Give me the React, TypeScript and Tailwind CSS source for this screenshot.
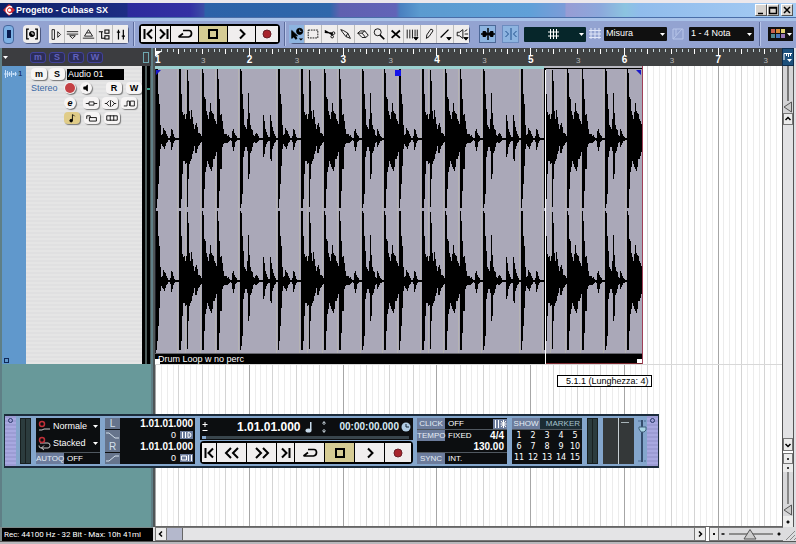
import { useState, type ReactNode } from "react";
import clsx from "clsx";

const BAR = 93.75;
const bars = [0, 1, 2, 3, 4, 5, 6];

// [up, down] peaks of the drum loop, one entry per pixel
const hit: number[][] = [
  [70, 69], [70, 60], [45, 45], [35, 27], [14, 10], [4, 5], [5, 7], [11, 8], [9, 10], [8, 7], [5, 4], [3, 3],
  [1, 1], [1, 1], [3, 3], [10, 11], [9, 8], [5, 4], [2, 2], [1, 1], [1, 1], [1, 1], [1, 1],
];
const snare: number[][] = [
  [70, 69], [70, 69], [45, 60], [27, 35], [24, 22], [25, 22], [20, 25], [25, 24],
  [69, 68], [58, 40], [28, 25], [20, 22], [29, 20], [22, 15], [15, 12], [10, 7], [14, 14], [16, 14], [12, 10],
  [6, 7], [6, 6], [5, 4], [3, 3],
];
const crash: number[][] = [
  [70, 69], [66, 69], [42, 50], [40, 33], [28, 28], [24, 22], [20, 25], [27, 28], [36, 30], [28, 32], [26, 28],
  [25, 20], [20, 20], [18, 17], [15, 13],
];
const tom: number[][] = [
  [70, 69], [60, 69], [40, 52], [24, 30], [25, 30], [18, 8], [10, 5], [5, 4], [5, 4], [5, 4], [3, 4], [4, 3],
  [2, 2], [1, 1], [1, 2], [8, 8], [10, 12], [6, 8], [4, 3], [3, 2], [1, 1], [1, 1], [1, 1],
];
const kick: number[][] = [
  [70, 69], [68, 65], [45, 55], [30, 18], [14, 12], [12, 8], [10, 8], [20, 12], [46, 40], [26, 35], [14, 14],
  [10, 12], [9, 8], [4, 4],
];
const ghosts: number[][] = [
  [3, 3], [5, 4], [6, 4], [5, 3], [3, 2], [1, 1], [1, 1], [1, 1], [1, 1], [24, 18], [18, 15], [10, 8], [7, 5],
  [4, 3], [2, 2], [2, 2], [24, 20], [18, 22], [12, 10], [8, 7], [5, 4], [3, 3], [1, 1], [1, 1],
];
const tail: number[][] = [[3, 3], [10, 8], [8, 6], [5, 4], [3, 2], [2, 2], [1, 1], [1, 1]];
const loop = [...hit, ...snare, ...crash, ...tom, ...kick, ...ghosts, ...hit, ...snare, ...crash, ...tom, ...kick, ...tail, ...crash];
const peaks = [...loop, ...loop].slice(0, 486);

function wavePath(center: number) {
  return peaks.map(([up, down], x) => `M${x} ${center - up}h1v${up + down}h-1z`).join("");
}

const slices = peaks.map(([up], x) => (up >= 69 && (x === 0 || peaks[x - 1][0] < 69) ? x : -1)).filter((x) => x > 0);

function Icon({ children, w = 16, size = 16, className }: { children: ReactNode; w?: number; size?: number; className?: string }) {
  return (
    <svg
      viewBox={`0 0 ${w} 16`}
      width={w === 16 ? size : w}
      height={size}
      fill="none"
      stroke="currentColor"
      strokeWidth={1}
      className={clsx("shrink-0", className)}
      aria-hidden="true"
    >
      {children}
    </svg>
  );
}

const glyphs = {
  start: <path d="M2.500 3v10M10 3.500 5.500 8l4.500 4.500" strokeWidth={2} />,
  end: <path d="M3 3.500 7.500 8 3 12.500M10.500 3v10" strokeWidth={2} />,
  rewind: <path d="M7 3 2 8l5 5M14 3 9 8l5 5" strokeWidth={2} />,
  forward: <path d="M2 3l5 5-5 5M9 3l5 5-5 5" strokeWidth={2} />,
  cycle: <path d="M6 4.500h6q2.500 0 2.500 3T11.500 11H1.500M6 7.500 1.500 11" strokeWidth={1.700} />,
  stop: <rect x="4" y="4" width="8" height="8" strokeWidth={2} />,
  play: <path d="m6 3.500 4.500 4.500L6 12.500" strokeWidth={2} />,
  record: <circle cx="8" cy="8" r="4" fill="#a8242c" stroke="#6a2028" strokeWidth={1} />,
};

const views: { label: string; icon: ReactNode }[] = [
  { label: "Show Inspector", icon: <path d="M2.500 2v12h3V2zM9.500 4.500v7L13 8z" /> },
  { label: "Show Infoline", icon: <path d="M1 4.500h14M1 7.500h14M4.500 9.500h7L8 13z" /> },
  { label: "Show Overview", icon: <path d="M8 2 5.500 6h5zM5.500 6 3 10h10l-2.500-4M1 12.500h14" /> },
  { label: "Open Pool", icon: <path d="M1 4.500h5M4.500 4.500v8h4M8.500 2.500h5v4h-5zM8.500 9.500h5v4h-5z" strokeWidth={1.300} /> },
  { label: "Open Mixer", icon: <path d="M5.500 2v12M11.500 2v12M3.500 5h4M9.500 10h4" strokeWidth={1.500} /> },
];

const tools: { label: string; icon: ReactNode }[] = [
  {
    label: "Object Selection",
    icon: (
      <>
        <path d="M2 4v9l2.500-2 2 3 1.500-1-2-3h2.500z" fill="currentColor" />
        <circle cx="11" cy="5" r="3.500" fill="currentColor" />
        <path d="M11 3v2h2" stroke="#8db4e0" />
        <path d="M10 13h5l-2.500 2.500z" fill="currentColor" stroke="none" />
      </>
    ),
  },
  { label: "Range Selection", icon: <path d="M2.500 3.500h11v9h-11z" strokeDasharray="2 1" /> },
  {
    label: "Split",
    icon: (
      <>
        <path d="m2 4 9 5M2 6l9 1" strokeWidth={1.500} />
        <circle cx="12" cy="7" r="1.500" />
        <circle cx="10.500" cy="11" r="1.500" />
      </>
    ),
  },
  { label: "Glue", icon: <path d="m2 3 3 1 5 3 3 6-5-2-4-5zM10 7l-2 4" /> },
  { label: "Erase", icon: <path d="m2 7 3-2.500h5l4 5-3 2.500H7zM2 7h5l4 5M7 7l3-2.500" /> },
  {
    label: "Zoom",
    icon: (
      <>
        <circle cx="6.500" cy="6" r="4" />
        <path d="m9 9 5 5" strokeWidth={2} />
      </>
    ),
  },
  { label: "Mute", icon: <path d="m3 4 9.500 8.500M12.500 4 3 12.500" strokeWidth={2} /> },
  {
    label: "Time Warp",
    icon: (
      <>
        <path d="M2.500 3v10M5.500 3v10M8.500 3v10M11.500 3v8M14 3v8" />
        <path d="M10 12h5l-2.500 3z" fill="currentColor" />
      </>
    ),
  },
  { label: "Draw", icon: <path d="M10 2.500 5.500 9 5 13l3-2 4.500-6.500q0-2-2.500-2z" /> },
  {
    label: "Line",
    icon: (
      <>
        <path d="m3 12 9-9" strokeWidth={1.500} />
        <path d="M10 12h5l-2.500 3z" fill="currentColor" />
      </>
    ),
  },
  {
    label: "Play",
    icon: (
      <>
        <path d="M2.500 6v4H5l4 3V3L5 6zM11 5l3-2M11 8h4" />
        <path d="M10 12h5l-2.500 3z" fill="currentColor" />
      </>
    ),
  },
];

function TransportKeys({ full }: { full?: boolean }) {
  const [active, setActive] = useState("Stop");
  const keys = [
    { label: "Previous Marker", icon: glyphs.start, w: 13, grow: "w-[14px]" },
    ...(full
      ? [
          { label: "Rewind", icon: glyphs.rewind, w: 16, grow: "w-[29px]" },
          { label: "Forward", icon: glyphs.forward, w: 16, grow: "w-[29px]" },
        ]
      : []),
    { label: "Next Marker", icon: glyphs.end, w: 13, grow: full ? "w-[17px]" : "w-[14px]" },
    { label: "Cycle", icon: glyphs.cycle, w: 16, grow: full ? "w-[29px]" : "w-[27px]" },
    { label: "Stop", icon: glyphs.stop, w: 16, grow: full ? "w-[29px]" : "w-[28px]" },
    { label: "Start", icon: glyphs.play, w: 16, grow: full ? "w-[29px]" : "w-[27px]" },
    { label: "Record", icon: glyphs.record, w: 16, grow: full ? "w-[26px]" : "w-[22px]" },
  ];
  return (
    <div className={clsx("flex gap-px rounded-sm bg-black p-0.5", full ? "h-[23px]" : "h-5")}>
      {keys.map((key) => (
        <button
          key={key.label}
          aria-label={key.label}
          onClick={() => setActive(key.label)}
          className={clsx(
            "flex items-center justify-center overflow-hidden text-black",
            key.grow,
            active === key.label ? "bg-[#d6cc94]" : "bg-[#f0eeee]",
          )}
        >
          <Icon w={key.w}>{key.icon}</Icon>
        </button>
      ))}
    </div>
  );
}

function Dropdown({ label, options, className }: { label: string; options: string[]; className?: string }) {
  return (
    <div className={clsx("relative flex items-center text-white", className)}>
      <select aria-label={label} className="h-full w-full appearance-none bg-transparent pl-0.5 outline-none">
        {options.map((option) => (
          <option key={option}>{option}</option>
        ))}
      </select>
      <Caret className="pointer-events-none absolute right-0.5" />
    </div>
  );
}

function Caret({ className }: { className?: string }) {
  return (
    <svg viewBox="0 0 5 3" width={5} height={3} className={className} aria-hidden="true">
      <path d="M0 0h5L2.500 3z" fill="currentColor" />
    </svg>
  );
}

function Separator() {
  return <div className="h-6 w-0.5 border-l border-[#5d6c9c] bg-[#b9c6ea]" />;
}

function TitleBar() {
  return (
    <div className="flex h-[15px] items-center border-b border-[#4a6ea8] bg-[linear-gradient(90deg,#0c2068_0px,#1d2c84_127px,#2d2a9c_128px,#3430a4_190px,#3b4ea6_204px,#2c62a8_205px,#2f67ab_330px,#6060b0_340px,#6264b8_396px,#4a80c0_400px,#5b9bd0_420px,#60a0d8_530px,#7c9cd8_565px,#989cd4_566px,#8ca8dc_600px,#8cc4e0_625px,#90bcec_640px,#a6ccf4_100%)] px-[3px]">
      <svg viewBox="0 0 12 12" width={12} height={12} aria-hidden="true">
        <path d="M6 0l6 6-6 6-6-6z" fill="#d02830" />
        <path d="M9 3.500A3.500 3.500 0 1 0 9 9" fill="none" stroke="#fff" strokeWidth={1.500} />
        <circle cx="6.500" cy="6.200" r="1.600" fill="#fff" />
      </svg>
      <h1 className="ml-px flex-1 text-[9px] leading-3 font-bold text-white">Progetto - Cubase SX</h1>
      <div className="flex">
        {[
          { label: "Minimize", d: "M2 8.500h5" },
          { label: "Maximize", d: "M1.500 2.500h7v6h-7zM1 3h8" },
          { label: "Close", d: "m2 2 6 6M8 2 2 8" },
        ].map((b) => (
          <button
            key={b.label}
            aria-label={b.label}
            className={clsx(
              "flex h-3 w-3 items-center justify-center border border-t-white border-r-[#555] border-b-[#555] border-l-white bg-[#d8d4d0]",
              b.label === "Close" && "ml-0.5",
            )}
          >
            <svg viewBox="0 0 10 10" width={10} height={10} fill="none" stroke="#000" strokeWidth={1.500} aria-hidden="true">
              <path d={b.d} />
            </svg>
          </button>
        ))}
      </div>
    </div>
  );
}

function Toolbar() {
  const [tool, setTool] = useState("Object Selection");
  return (
    <div className="flex h-[30px] items-center border-t-[3px] border-[#a9c3e9] bg-[#93a3d1] pb-px text-[9px] text-black">
      <button aria-label="Activate Project" className="ml-[3px] flex h-[19px] w-[11px] items-center justify-center rounded-sm border border-[#46679c] bg-[#7db0e4]">
        <span className="h-2 w-1 bg-[#0a1c50]" />
      </button>
      <button aria-label="Constrain Delay Compensation" className="ml-[9px] flex h-[18px] w-[17px] items-center justify-center rounded-sm bg-[#efeded] shadow-[1px_1px_0_#4c5880]">
        <Icon size={14}>
          <path d="M4.500 2.500H2v11h2.500M11.500 2.500H14v11h-2.500" strokeWidth={1.500} />
          <circle cx="8" cy="8" r="3" fill="currentColor" />
          <path d="M8 5.500V8h2.500" stroke="#fff" />
        </Icon>
      </button>
      <div className="ml-[9px] flex gap-px rounded-sm bg-[#bbb] shadow-[1px_1px_0_#4c5880]">
        {views.map((v) => (
          <button key={v.label} aria-label={v.label} className="flex h-[18px] w-[15px] items-center justify-center overflow-hidden bg-[#efeded]">
            <Icon size={13}>{v.icon}</Icon>
          </button>
        ))}
      </div>
      <div className="ml-[5px]">
        <Separator />
      </div>
      <div className="ml-1">
        <TransportKeys />
      </div>
      <div className="ml-1">
        <Separator />
      </div>
      <div className="ml-[3px] flex gap-px rounded-sm bg-[#bbb] shadow-[1px_1px_0_#4c5880]">
        {tools.map((t, i) => (
          <button
            key={t.label}
            aria-label={t.label}
            onClick={() => setTool(t.label)}
            className={clsx(
              "flex h-[18px] items-center justify-center overflow-hidden",
              i % 2 ? "w-4" : "w-[15px]",
              tool === t.label ? "bg-[#8db4e0]" : "bg-[#efeded]",
            )}
          >
            <Icon size={14}>{t.icon}</Icon>
          </button>
        ))}
      </div>
      <button aria-label="Autoscroll" className="ml-[10px] flex h-[18px] w-[17px] items-center justify-center border border-[#4c6898] bg-[#8db4e0]">
        <Icon>
          <path d="M8 2v12M1 8h14" strokeWidth={1.500} />
          <path d="M3 5.500h2.500L7 8l-1.500 2.500H3zM13 5.500h-2.500L9 8l1.500 2.500H13z" fill="currentColor" />
        </Icon>
      </button>
      <button aria-label="Snap" className="ml-[6px] flex h-[18px] w-[17px] items-center justify-center border border-[#6c8cc0] bg-[#8db4e0] text-[#20508c]">
        <Icon>
          <path d="M8 2v12M2.500 5 5.500 8l-3 3M13.500 5l-3 3 3 3" />
        </Icon>
      </button>
      <button aria-label="Snap Mode" aria-haspopup="menu" className="ml-[5px] flex h-[15px] w-[62px] items-center justify-end rounded-[1px] bg-[#06262a] pr-0.5 text-white">
        <Icon className="mr-[18px]">
          <path d="M5.500 3v10M8.500 3v10M11.500 3v10M3 6h11M3 10h11" />
        </Icon>
        <Caret />
      </button>
      <Icon className="mx-px text-[#dfe6f8]">
        <path d="M4 2v11M8 2v11M12 2v11M2 4.500h12M2 8h12M2 11.500h12" />
      </Icon>
      <Dropdown label="Grid Type" options={["Misura", "Beat"]} className="h-[14px] w-[63px] rounded-[1px] bg-[#101010]" />
      <Icon className="mx-[3px] text-[#b8c6ea]">
        <path d="M3 3v10h10V3zM3 13 12 3M6 3v6" />
      </Icon>
      <Dropdown label="Quantize" options={["1 - 4 Nota", "1 - 8 Nota"]} className="h-[14px] w-[65px] rounded-[1px] bg-[#101010]" />
      <div className="ml-[5px]">
        <Separator />
      </div>
      <button aria-label="Colour Palette" aria-haspopup="menu" className="ml-auto mr-[3px] flex h-[14px] w-[25px] items-center gap-0.5 bg-[#101010] pl-[3px] text-white">
        <svg viewBox="0 0 14 10" width={14} height={10} aria-hidden="true">
          <path d="M0 0h4v4H0z" fill="#c86050" />
          <path d="M5 0h4v4H5z" fill="#d88838" />
          <path d="M10 0h4v4h-4z" fill="#e0d070" />
          <path d="M0 5h4v4H0z" fill="#508890" />
          <path d="M5 5h4v4H5z" fill="#4878c0" />
          <path d="M10 5h4v4h-4z" fill="#9878b8" />
        </svg>
        <Caret />
      </button>
    </div>
  );
}

function Ruler() {
  return (
    <div className="h-[18px] min-w-0 flex-1 overflow-hidden bg-[#404243]">
      <svg width={760} height={18} aria-hidden="true" className="block">
        {Array.from({ length: 107 }, (_, i) => (
          <path
            key={i}
            d={`M${Math.round((i * BAR) / 16) + 0.5} ${i % 16 === 0 ? 0 : 1}v${i % 16 === 0 ? 8 : i % 4 === 0 ? 5 : 3}`}
            stroke={i % 4 === 0 ? "#fff" : "#c4d4d8"}
          />
        ))}
        <path d="M1 3h6L1 8z" fill="#fff" />
        {bars.map((bar) => (
          <g key={bar}>
            <text x={bar === 0 ? 0 : bar * BAR - 2} y={15} fill="#fff" fontSize={10} fontWeight={700}>
              {bar + 1}
            </text>
            <text x={bar * BAR + 46} y={15} fill="#b8b8b8" fontSize={8}>
              3
            </text>
          </g>
        ))}
      </svg>
    </div>
  );
}

function Chip({ label, wide, gold, round, children }: { label: string; wide?: boolean; gold?: boolean; round?: boolean; children: ReactNode }) {
  return (
    <button
      aria-label={label}
      className={clsx(
        "flex h-3 items-center justify-center overflow-hidden text-[9px] leading-3 font-bold text-black shadow-[1px_1px_1px_#777]",
        wide ? "w-4" : "w-3",
        round ? "rounded-full" : "rounded-sm",
        gold ? "bg-[#e0cc88]" : "bg-[#f6f4f4]",
      )}
    >
      {children}
    </button>
  );
}

function Track() {
  return (
    <div className="flex h-[298px] bg-[#e3e3e4]">
      <div className="flex w-6 flex-col justify-between bg-[#6098cc] pt-[3px] text-[8px] leading-[10px] text-[#0c2048]">
        <div className="flex items-center">
          <svg viewBox="0 0 16 10" width={16} height={10} stroke="#c8e0f8" aria-hidden="true">
            <path d="M3.500 1v8M5.500 2v6M7.500 3v4M9.500 2v6M11.500 4v2M13.500 3v4M2 5h13" />
          </svg>
          1
        </div>
        <button aria-label="Track Controls" className="mb-px ml-0.5 h-[5px] w-[5px] border border-[#102858]" />
      </div>
      <div className="w-[116px] bg-[repeating-linear-gradient(0deg,#e5e5e5_0px,#e5e5e5_2px,#e0e0e1_2px,#e0e0e1_4px)] pt-0.5 pl-[5px] text-[9px] leading-3">
        <div className="flex h-3 items-center">
          <Chip label="Mute" wide>m</Chip>
          <span className="w-0.5" />
          <Chip label="Solo" wide>S</Chip>
          <input aria-label="Track name" defaultValue="Audio 01" className="ml-0.5 h-[11px] w-[57px] bg-black pl-px text-white outline-none" />
        </div>
        <div className="mt-0.5 flex">
          <span className="w-[37px] text-[#3a68a4]">Stereo</span>
          <div className="flex flex-col gap-[3px]">
            <div className="flex gap-1">
              <Chip label="Record Enable" round>
                <span className="h-2.5 w-2.5 rounded-full bg-[#c44044]" />
              </Chip>
              <Chip label="Monitor" round>
                <Icon w={12} size={12}>
                  <path d="M3 6.500v3h2l3 2.500V4L5 6.500z" fill="currentColor" />
                </Icon>
              </Chip>
              <span className="w-1.5" />
              <Chip label="Read Automation" wide>R</Chip>
              <Chip label="Write Automation" wide>W</Chip>
            </div>
            <div className="flex gap-[3px]">
              <Chip label="Edit Channel" round>
                <em>e</em>
              </Chip>
              <span className="w-px" />
              <Chip label="Inserts" wide>
                <Icon size={13}>
                  <path d="M1 8h4M11 8h4M5 6h6v4H5z" />
                </Icon>
              </Chip>
              <Chip label="Equalizer" wide>
                <Icon size={13}>
                  <path d="M1 8h3M12 8h3M6.500 4.500 3 8l3.500 3.500M9.500 4.500 13 8l-3.500 3.500M8 4v8" />
                </Icon>
              </Chip>
              <Chip label="Sends" wide>
                <Icon size={13}>
                  <path d="M1 11h4V5h3v6M9 5h5v6H9z" />
                </Icon>
              </Chip>
            </div>
            <div className="flex gap-1">
              <Chip label="Musical Time Base" wide gold>
                <Icon size={14}>
                  <path d="M8.500 4v7M9 4l2 2" />
                  <circle cx="7" cy="11" r="1.500" fill="currentColor" />
                </Icon>
              </Chip>
              <Chip label="Lock" wide>
                <Icon size={14}>
                  <path d="M5 7.500h8v4H5zM2 9V5.500h4v2" />
                </Icon>
              </Chip>
              <Chip label="Lanes" wide>
                <Icon size={14}>
                  <path d="M2 5.500h12v5H2zM6 5v6M10 5v6" />
                </Icon>
              </Chip>
            </div>
          </div>
        </div>
      </div>
      <div className="flex flex-1 gap-0.5 bg-[#4d5b5b]">
        <div className="w-[3px] bg-black" />
        <div className="w-[3px] bg-black pt-[22px]">
          <div className="h-0.5 bg-[#3fa08c]" />
        </div>
      </div>
    </div>
  );
}

function TrackList() {
  return (
    <div className="flex w-[153px] shrink-0 flex-col border-r-2 border-l-2 border-[#5f7f86] bg-[#68999a]">
      <div className="flex h-[18px] items-center bg-[#3c3d40] text-white">
        <Caret className="ml-px" />
        <div className="ml-[22px] flex flex-1 gap-[3px]">
          {["m", "S", "R", "W"].map((k) => (
            <button key={k} className="h-[11px] w-4 rounded-[3px] border border-[#42429a] bg-[#2c2d58] text-[9px] leading-[9px] font-bold text-[#6262bc]">
              {k}
            </button>
          ))}
        </div>
        <span className="mr-0.5 h-[11px] w-1.5 border border-[#6fa8b0]" />
      </div>
      <Track />
    </div>
  );
}

function GridLines() {
  return (
    <svg className="absolute inset-0 h-full w-full" aria-hidden="true">
      {Array.from({ length: 120 }, (_, i) => (
        <rect
          key={i}
          x={Math.round((i * BAR) / 16)}
          y={0}
          width={1}
          height="100%"
          fill={i % 16 === 0 ? "#a6a6a6" : i % 4 === 0 ? "#d4d4d4" : "#ececec"}
        />
      ))}
      <rect x={0} y={298} width="100%" height={1} fill="#d8d8d8" />
    </svg>
  );
}

function Clip() {
  return (
    <div className="relative w-[488px] border-r border-[#a04058] bg-[#aaa8b8]">
      <div className="flex h-[3px]">
        <div className="w-[389px] bg-[#9bd0d0]" />
        <div className="flex-1 border-b border-black bg-[#b8b8c0]" />
      </div>
      <svg width={487} height={284} className="block" aria-hidden="true">
        {slices.map((x) => (
          <rect key={x} x={x - 1} y={0} width={1} height={284} fill="#b5b3b2" />
        ))}
        <g transform="translate(1 0)">
          <path d={wavePath(70)} />
          <path d={wavePath(212)} />
        </g>
        <rect x={0} y={0} width={1} height={284} fill="#202028" />
        <path d="M1 1h5l-5 5zM486 1h-5l5 5z" fill="#1818c8" />
        <path d="M240 1h6v6h-6z" fill="#1414e8" />
      </svg>
      <div className="flex h-[11px] items-center justify-between border-t border-[#66666e] bg-black bg-clip-padding">
        <span className="h-[5px] w-[5px] self-end bg-white" />
        <span className="-ml-[2px] flex-1 text-[9px] leading-[10px] text-white">Drum Loop w no perc</span>
        <span className="h-[5px] w-[5px] self-end bg-white" />
      </div>
      <div className="absolute bottom-0 left-[390px] h-[294px] w-px bg-white" />
      <div className="absolute right-0 bottom-0 h-px w-[96px] bg-[#7c2830]" />
    </div>
  );
}

function ScrollButton({ label, d, className }: { label: string; d: string; className?: string }) {
  return (
    <button aria-label={label} className={clsx("flex shrink-0 items-center justify-center border border-[#777] bg-[#ececec]", className)}>
      <svg viewBox="0 0 8 8" width={8} height={8} fill="none" stroke="#000" strokeWidth={1.500} aria-hidden="true">
        <path d={d} />
      </svg>
    </button>
  );
}

const UP = "M1.500 5 4 2.500 6.500 5";
const DOWN = "M1.500 3 4 5.500 6.500 3";

function VerticalBar() {
  return (
    <div className="flex w-3 shrink-0 flex-col border-x border-[#555] bg-[#d8d8da]">
      <div className="flex h-[47px] flex-col items-center bg-[#d4d4d6]">
        <div className="w-0.5 flex-1 bg-[#777]" />
        <svg viewBox="0 0 10 12" width={10} height={12} fill="#ccc" stroke="#555" aria-hidden="true">
          <path d="M8.500 1v10L1 6z" />
        </svg>
      </div>
      <ScrollButton label="Scroll up" d={UP} className="h-3" />
      <div className="flex-1 bg-[#e2e2e4]" />
      <ScrollButton label="Scroll down" d={DOWN} className="h-[13px]" />
      <div className="h-0.5 bg-white" />
      <ScrollButton label="Zoom presets" d="M3 4h2" className="h-[11px]" />
      <ScrollButton label="Zoom out" d="M3 4h2" className="h-2 border-0" />
      <div className="flex h-11 flex-col items-center">
        <div className="w-0.5 flex-1 bg-[#888]" />
        <svg viewBox="0 0 10 12" width={10} height={12} fill="#ccc" stroke="#555" aria-hidden="true">
          <path d="M8.500 1v10L1 6z" />
        </svg>
      </div>
      <ScrollButton label="Zoom in" d="M2.500 4h3M4 2.500v3" className="h-[11px] border-0" />
    </div>
  );
}

function BottomBar() {
  return (
    <div className="flex h-[15px] border-b border-[#555] bg-[#dcdcde]">
      <div className="w-[153px] shrink-0 overflow-hidden border-t border-l-2 border-[#7c8888] bg-black pl-0.5 font-['Roboto',sans-serif] text-[8px] leading-[13px] whitespace-nowrap text-white">
        Rec: 44100 Hz - 32 Bit - Max: 10h 41mi
      </div>
      <ScrollButton label="Scroll left" d="M5 1.500 2.500 4 5 6.500" className="ml-0.5 w-3" />
      <div className="flex flex-1 border-y border-[#777] bg-[#e4e4e6]">
        <div className="w-4 border-r border-[#666] bg-[#b4b8cc]" />
      </div>
      <ScrollButton label="Scroll right" d="M3 1.500 5.500 4 3 6.500" className="w-3" />
      <div className="w-[3px] bg-white" />
      <ScrollButton label="Zoom presets" d="M3 4h2M4 3v2" className="w-[10px]" />
      <div className="flex w-[64px] items-center border-y border-[#777] text-[#444]">
        <ScrollButton label="Zoom out" d="M2.500 4h3" className="h-2 w-2 border-0 bg-transparent" />
        <svg viewBox="0 0 48 12" width={48} height={12} aria-hidden="true">
          <path d="M2 5h44v2H2z" fill="#8c8c8c" />
          <path d="M23 1.500 29 11H17z" fill="#ccc" stroke="#555" />
        </svg>
        <ScrollButton label="Zoom in" d="M2.500 4h3M4 2.500v3" className="h-2 w-2 border-0 bg-transparent" />
      </div>
      <svg viewBox="0 0 13 14" width={13} height={14} stroke="#888" aria-hidden="true">
        <path d="M3 13 12 4M7 13l5-5M11 13l2-2" />
      </svg>
    </div>
  );
}

function Tag({ children }: { children: ReactNode }) {
  return <span className="w-[28px] bg-[#6c7c9c] text-center whitespace-nowrap text-[#e4ecf4]">{children}</span>;
}

function Locator({ name, curve, punch }: { name: string; curve: string; punch: ReactNode }) {
  return (
    <div className="flex h-[23px]">
      <div className="flex w-[15px] flex-col gap-px text-center text-[10px] leading-[11px] text-[#d4e0ec]">
        <span className="h-[11px] bg-[#66748c]">{name}</span>
        <svg viewBox="0 0 15 11" width={15} height={11} fill="none" stroke="currentColor" className="bg-[#66748c]" aria-hidden="true">
          <path d={curve} />
        </svg>
      </div>
      <div className="flex flex-1 flex-col items-end pr-0.5 text-white">
        <span className="text-[10px] leading-3 font-bold">1.01.01.000</span>
        <span className="flex items-center gap-1 text-[9px] leading-[10px]">
          0
          <svg viewBox="0 0 13 8" width={13} height={8} fill="none" stroke="#fff" className="bg-[#6c7c9c]" aria-hidden="true">
            {punch}
          </svg>
        </span>
      </div>
    </div>
  );
}

function Meter() {
  return (
    <div className="flex h-[46px] w-[11px] justify-center gap-px bg-[#182020] p-px">
      <div className="flex-1 bg-[#2c3c3e]" />
      <div className="flex-1 bg-[#2c3c3e]" />
    </div>
  );
}

function Handle() {
  return (
    <div className="w-[11px] self-stretch bg-[repeating-linear-gradient(0deg,#9c9cd4_0px,#9c9cd4_2px,#a8a8e0_2px,#a8a8e0_4px)] pt-0.5">
      <span className="mx-auto block h-[5px] w-[5px] rounded-sm border border-[#283868]" />
    </div>
  );
}

function TransportPanel() {
  return (
    <section
      aria-label="Transport"
      className="absolute top-[366px] left-1 flex h-[54px] w-max items-center border border-y-2 border-[#1c2c3c] bg-[#84a6cc] text-[8px] leading-[11px] text-white"
    >
      <Handle />
      <div className="ml-1">
        <Meter />
      </div>
      <div className="ml-[5px] flex h-[46px] w-16 flex-col bg-[#0c0e10] text-[9px]">
        <div className="flex h-[17px] items-center">
          <Icon className="text-[#c8c8c8]">
            <circle cx="6" cy="5" r="2.500" stroke="#c03038" strokeWidth={1.500} />
            <path d="M3 11h3l2-1h6" />
          </Icon>
          <Dropdown label="Record Mode" options={["Normale", "Merge"]} className="-ml-px h-4 flex-1" />
        </div>
        <div className="flex h-[17px] items-center">
          <Icon className="text-[#c8c8c8]">
            <path d="M4 7h8q2 0 2 2.500T12 12H5q-2 0-2-2.500M8 9.500 5.500 12 8 14" />
            <circle cx="6" cy="4" r="2.500" stroke="#c03038" strokeWidth={1.500} />
          </Icon>
          <Dropdown label="Cycle Record Mode" options={["Stacked", "Mix"]} className="-ml-px h-4 flex-1" />
        </div>
        <div className="flex h-3 items-center border-t border-[#505860] text-[8px]">
          <Tag>AUTOQ</Tag>
          <span className="ml-[3px]">OFF</span>
        </div>
      </div>
      <div className="ml-[5px] flex h-[46px] w-[90px] flex-col justify-between bg-[#0c0e10]">
        <Locator name="L" curve="M1 3h3l6 5h4" punch={<path d="M2.500 1v6M5.500 1v6M8 1.500v5q3 0 3-2.500T8 1.500" />} />
        <Locator name="R" curve="M1 8h3l6-5h4" punch={<path d="M1.500 2h5v4h-5zM8.500 1v6M11.500 1v6" />} />
      </div>
      <div className="ml-[5px] flex h-[46px] flex-col justify-between">
        <div className="flex h-[22px] flex-col bg-[#0c0e10]">
          <div className="flex h-[18px] items-center px-0.5">
            <svg viewBox="0 0 6 12" width={6} height={12} stroke="#fff" aria-hidden="true">
              <path d="M3 1v5M.500 3.500h5M.500 9.500h5" />
            </svg>
            <span className="flex-1 text-right text-[12px] leading-4 font-bold">1.01.01.000</span>
            <svg viewBox="0 0 10 12" width={10} height={12} fill="#c8dcec" className="ml-[3px]" aria-hidden="true">
              <path d="M6 1h1.500v8H6z" />
              <ellipse cx="4.500" cy="9.500" rx="3" ry="2" />
            </svg>
            <svg viewBox="0 0 4 14" width={4} height={14} fill="none" stroke="#c8d4dc" className="mx-2" aria-hidden="true">
              <path d="M2 2v3M2 9v3M.500 3.500 2 1.500l1.500 2M.500 10.500 2 12.500l1.500-2" />
            </svg>
            <span className="ml-1.5 text-[10px] leading-4 font-bold text-[#d8eaf4]">00:00:00.000</span>
            <svg viewBox="0 0 10 10" width={10} height={10} className="ml-0.5" aria-hidden="true">
              <circle cx="5" cy="5" r="4.500" fill="#b0cce4" />
              <path d="M5 2v3h3" fill="none" stroke="#102030" />
            </svg>
          </div>
          <div className="mx-1 flex h-[3px] bg-[#39454c]">
            <span className="-ml-0.5 w-1 bg-[#84a6cc]" />
          </div>
        </div>
        <TransportKeys full />
      </div>
      <div className="ml-1 flex h-[46px] w-[90px] flex-col justify-between bg-[#0c0e10]">
        <div className="flex h-3 items-center border-b border-[#505860]">
          <Tag>CLICK</Tag>
          <span className="ml-[3px] flex-1">OFF</span>
          <svg viewBox="0 0 14 10" width={14} height={10} stroke="#fff" className="bg-[#6c7c9c]" aria-hidden="true">
            <path d="M2.500 1v8M5.500 1v8M8 2l5 6M13 2 8 8M10.500 1v8M7.500 5h6" />
          </svg>
        </div>
        <div className="flex h-[22px] items-start">
          <Tag>TEMPO</Tag>
          <span className="ml-[3px] flex-1">FIXED</span>
          <span className="-ml-5 pr-[3px] text-right text-[10px] leading-[11px] font-bold">
            4/4
            <br />
            130.00
          </span>
        </div>
        <div className="flex h-3 items-center border-t border-[#505860]">
          <Tag>SYNC</Tag>
          <span className="ml-[3px]">INT.</span>
        </div>
      </div>
      <div className="ml-[5px] flex h-[46px] w-[70px] flex-col bg-[#0c0e10]">
        <div className="flex h-3 items-center justify-between border-b border-[#505860] bg-[#1c2c34]">
          <Tag>SHOW</Tag>
          <span className="pr-0.5 text-[#a4c0cc]">MARKER</span>
        </div>
        <div className="grid grid-cols-5 text-center font-['DejaVu_Sans',sans-serif]">
          {Array.from({ length: 15 }, (_, i) => (
            <button key={i} className="leading-[11px]">
              {i + 1}
            </button>
          ))}
        </div>
      </div>
      <div className="ml-[5px]">
        <Meter />
      </div>
      <div className="ml-[5px] flex h-[46px] w-[31px] bg-[#343839]">
        <div className="w-1/2 border-r border-[#c8d0d4]" />
        <div className="mt-1 ml-0.5 h-px w-2 bg-[#a8b4b8]" />
      </div>
      <svg viewBox="0 0 11 46" width={11} height={46} className="ml-0.5" aria-hidden="true">
        <path d="M5 2h2v42H5z" fill="#344c6c" />
        <path d="M2 3h3M8 3h2M2 43h3M8 43h2" stroke="#4c6c94" />
        <path d="M3 9h7v3L8 14H5L3 11z" fill="#a8d4e4" stroke="#40607c" />
      </svg>
      <Handle />
    </section>
  );
}

export default function App() {
  return (
    <div className="flex min-h-screen flex-col overflow-hidden bg-[#d4d4d8] font-['Liberation_Sans',Arial,sans-serif]">
      <div className="h-[3px] bg-[#ece8ec]" />
      <TitleBar />
      <Toolbar />
      <main className="relative flex flex-1 border-r-2 border-[#e0e0e4]">
        <TrackList />
        <div className="w-0.5 shrink-0 bg-[#4f5658]" />
        <div className="flex min-w-0 flex-1 flex-col">
          <div className="flex">
            <Ruler />
            <button aria-label="Ruler Format" className="flex h-[18px] w-3 items-center justify-center border border-[#0c2c4c] bg-[#1c507c] text-white">
              <svg viewBox="0 0 10 12" width={10} height={12} fill="none" stroke="currentColor" aria-hidden="true">
                <path d="M1 9V2.500h8M3.500 3v2M5.500 3v3M7.500 3v2" />
                <path d="M4 8h5l-2.500 3z" fill="currentColor" stroke="none" />
              </svg>
            </button>
          </div>
          <div className="flex flex-1">
            <div className="relative min-w-0 flex-1 overflow-hidden border-b border-[#666] bg-white">
              <GridLines />
              <Clip />
              <div
                role="tooltip"
                className="absolute top-[309px] left-[402px] h-3 w-[95px] border border-black bg-white pl-2 text-[9px] leading-[10px] whitespace-nowrap text-black"
              >
                5.1.1 (Lunghezza: 4)
              </div>
            </div>
            <VerticalBar />
          </div>
        </div>
        <TransportPanel />
      </main>
      <BottomBar />
      <div className="h-0.5 bg-[#b8b8bc]" />
    </div>
  );
}
